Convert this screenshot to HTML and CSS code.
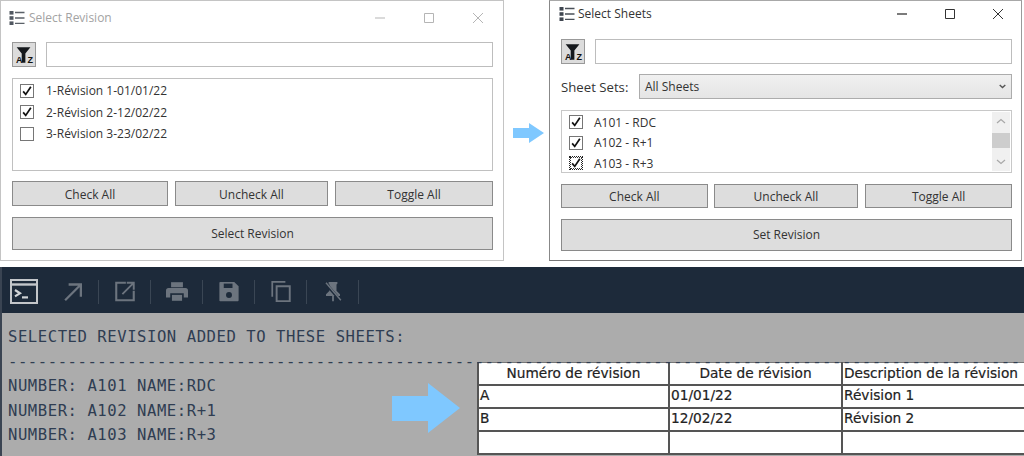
FILE: index.html
```html
<!DOCTYPE html>
<html lang="fr">
<head>
<meta charset="utf-8">
<title>Revision</title>
<link rel="stylesheet" href="styles.css">
</head>
<body>
<svg class="defs" width="0" height="0" aria-hidden="true">
  <symbol id="listicon" viewBox="0 0 16 16">
    <g fill="#3f4650"><rect x="0.5" y="1" width="4" height="3.6"/><rect x="0.5" y="6.2" width="4" height="3.6"/><rect x="0.5" y="11.4" width="4" height="3.6"/></g>
    <g stroke="#4a5058" stroke-width="1.3"><path d="M6 2.5h9.5M6 8h9.5M6 13.4h9.5"/></g>
  </symbol>
  <symbol id="funnel" viewBox="0 0 24 24">
    <path d="M4 4h15l-5.5 7v10h-4V11z" fill="#15181c"/>
  </symbol>
</svg>

<main class="page">
  <section class="toprow">
    <div class="window win-a">
      <header class="titlebar titlebar-a">
        <svg class="appicon"><use href="#listicon"/></svg>
        <span class="title">Select Revision</span>
        <span class="winctl">
          <svg width="12" height="12" viewBox="0 0 12 12"><path d="M1 6h10" stroke="currentColor"/></svg>
          <svg width="12" height="12" viewBox="0 0 12 12"><path d="M1.5 1.5h9v9h-9z" stroke="currentColor" fill="none"/></svg>
          <svg width="12" height="12" viewBox="0 0 12 12"><path d="M1 1l10 10M11 1L1 11" stroke="currentColor" fill="none"/></svg>
        </span>
      </header>
      <div class="search search-a">
        <button class="filterbtn"><svg class="funnel"><use href="#funnel"/></svg><span class="az">A</span><span class="az">Z</span></button>
        <div class="input"></div>
      </div>
      <div class="list list-a">
        <div class="row"><span class="cb on"><svg viewBox="0 0 14 14"><path d="M2.5 7.5l3 3.5 6-9" fill="none" stroke="#111" stroke-width="2"/></svg></span><span>1-Révision 1-01/01/22</span></div>
        <div class="row"><span class="cb on"><svg viewBox="0 0 14 14"><path d="M2.5 7.5l3 3.5 6-9" fill="none" stroke="#111" stroke-width="2"/></svg></span><span>2-Révision 2-12/02/22</span></div>
        <div class="row"><span class="cb"></span><span>3-Révision 3-23/02/22</span></div>
      </div>
      <div class="actions actions-a">
        <button class="btn">Check All</button>
        <button class="btn">Uncheck All</button>
        <button class="btn">Toggle All</button>
      </div>
      <button class="btn big big-a">Select Revision</button>
    </div>

    <div class="gap">
      <svg class="arrow-small" viewBox="0 0 31 20"><path d="M0 5h16V0l15 10-15 10v-5H0z" fill="#7fc8ff"/></svg>
    </div>

    <div class="window win-b">
      <header class="titlebar titlebar-b">
        <svg class="appicon"><use href="#listicon"/></svg>
        <span class="title">Select Sheets</span>
        <span class="winctl">
          <svg width="12" height="12" viewBox="0 0 12 12"><path d="M1 6h10" stroke="currentColor" stroke-width="1.3"/></svg>
          <svg width="12" height="12" viewBox="0 0 12 12"><path d="M1.5 1.5h9v9h-9z" stroke="currentColor" fill="none"/></svg>
          <svg width="12" height="12" viewBox="0 0 12 12"><path d="M1 1l10 10M11 1L1 11" stroke="currentColor" fill="none"/></svg>
        </span>
      </header>
      <div class="search search-b">
        <button class="filterbtn"><svg class="funnel"><use href="#funnel"/></svg><span class="az">A</span><span class="az">Z</span></button>
        <div class="input"></div>
      </div>
      <div class="setrow">
        <span class="setlabel">Sheet Sets:</span>
        <div class="combo"><span>All Sheets</span><svg width="7" height="5" viewBox="0 0 7 5"><path d="M.7 1l2.8 2.6L6.3 1" fill="none" stroke="#555" stroke-width="1.4"/></svg></div>
      </div>
      <div class="list list-b">
        <div class="rows">
          <div class="row"><span class="cb on"><svg viewBox="0 0 14 14"><path d="M2.5 7.5l3 3.5 6-9" fill="none" stroke="#111" stroke-width="2"/></svg></span><span>A101 - RDC</span></div>
          <div class="row"><span class="cb on"><svg viewBox="0 0 14 14"><path d="M2.5 7.5l3 3.5 6-9" fill="none" stroke="#111" stroke-width="2"/></svg></span><span>A102 - R+1</span></div>
          <div class="row"><span class="cb on dotted"><svg viewBox="0 0 14 14"><path d="M2.5 7.5l3 3.5 6-9" fill="none" stroke="#111" stroke-width="2"/></svg></span><span>A103 - R+3</span></div>
        </div>
        <div class="scrollbar">
          <svg width="10" height="6" viewBox="0 0 10 6"><path d="M1 5l4-3.5L9 5" fill="none" stroke="#a8a8a8" stroke-width="1.2"/></svg>
          <div class="thumb"></div>
          <svg width="10" height="6" viewBox="0 0 10 6"><path d="M1 1l4 3.5L9 1" fill="none" stroke="#a8a8a8" stroke-width="1.2"/></svg>
        </div>
      </div>
      <div class="actions actions-b">
        <button class="btn">Check All</button>
        <button class="btn">Uncheck All</button>
        <button class="btn">Toggle All</button>
      </div>
      <button class="btn big big-b">Set Revision</button>
    </div>
  </section>

  <section class="console">
    <div class="toolbar">
      <svg class="tool term" viewBox="0 0 28 25"><path d="M1 1h26v23H1z" fill="none" stroke="#c3c6ca" stroke-width="2"/><path d="M1 5.5h26" stroke="#c3c6ca" stroke-width="2.4"/><path d="M5 11l5 3.2-5 3.2" fill="none" stroke="#d0d3d6" stroke-width="2.2"/><path d="M12 18.4h6" stroke="#d0d3d6" stroke-width="2.2"/></svg>
      <span class="sep first"></span>
      <svg class="tool" viewBox="0 0 24 24"><path d="M3 22L21 4M7 4h14v14" fill="none" stroke="#6c747e" stroke-width="2.6"/></svg>
      <span class="sep"></span>
      <svg class="tool" viewBox="0 0 24 24"><path d="M13 2H2v20h20V11" fill="none" stroke="#6c747e" stroke-width="2.4"/><path d="M9 15L21 3M14 2h8v8" fill="none" stroke="#6c747e" stroke-width="2.2"/></svg>
      <span class="sep"></span>
      <svg class="tool" viewBox="0 0 26 24"><path d="M6 1h14v6H6z" fill="#6c747e"/><path d="M3 8h20a3 3 0 0 1 3 3v8h-5v-5H5v5H0v-8a3 3 0 0 1 3-3z" fill="#6c747e"/><path d="M7 16h12v7H7z" fill="#6c747e"/></svg>
      <span class="sep"></span>
      <svg class="tool" viewBox="0 0 24 24"><path d="M2 1h16l5 5v16a1 1 0 0 1-1 1H2a1 1 0 0 1-1-1V2a1 1 0 0 1 1-1z" fill="#6c747e"/><path d="M6 3h10v5H6z" fill="#1d2a3a"/><circle cx="12" cy="16" r="3.4" fill="#1d2a3a"/></svg>
      <span class="sep"></span>
      <svg class="tool" viewBox="0 0 24 24"><path d="M7 6h15v17H7z" fill="none" stroke="#6c747e" stroke-width="2.2"/><path d="M2 18V1h15" fill="none" stroke="#6c747e" stroke-width="2"/></svg>
      <span class="sep"></span>
      <svg class="tool" viewBox="0 0 24 24"><path d="M7 1h10v2l-1 1v7l4 4v2h-7v6h-2v-6H4v-2l4-4V4L7 3z" fill="#6c747e"/><path d="M3 2l18 21" stroke="#1d2a3a" stroke-width="3.4"/><path d="M4 2l17 20" stroke="#6c747e" stroke-width="1.6"/></svg>
      <span class="sep"></span>
    </div>
    <div class="output">
      <div class="outline">SELECTED REVISION ADDED TO THESE SHEETS:</div>
      <div class="outline dashes">------------------------------------------------------------------------------------------------------</div>
      <div class="outline">NUMBER: A101 NAME:RDC</div>
      <div class="outline">NUMBER: A102 NAME:R+1</div>
      <div class="outline">NUMBER: A103 NAME:R+3</div>
      <svg class="arrow-big" viewBox="0 0 68 50"><path d="M0 13h36V0l32 25-32 25V38H0z" fill="#7fc8ff"/></svg>
      <table class="revtable">
        <colgroup><col class="c1"><col class="c2"><col class="c3"></colgroup>
        <tr class="headrow"><th>Numéro de révision</th><th>Date de révision</th><th class="thleft">Description de la révision</th></tr>
        <tr><td>A</td><td>01/01/22</td><td>Révision 1</td></tr>
        <tr><td>B</td><td>12/02/22</td><td>Révision 2</td></tr>
        <tr><td></td><td></td><td></td></tr>
      </table>
    </div>
  </section>
</main>
</body>
</html>
```
FILE: styles.css
```css
* { box-sizing: border-box; }
html, body { margin: 0; padding: 0; background: #fff; }
body { width: 1024px; height: 456px; overflow: hidden; font-family: "Open Sans", "Noto Sans", sans-serif; color: #333; }
.defs { position: absolute; }
.page { display: flex; flex-direction: column; height: 456px; }

.toprow { display: flex; height: 267px; flex: none; }
.window { display: flex; flex-direction: column; border: 1px solid #c4c4c4; background: #fff; height: 261px; }
.win-a { width: 504px; padding: 0 10px 0 11px; }
.win-b { width: 473px; padding: 0 9px 0 11px; border-color: #a8a8a8 #9a9a9a #777 #888; }
.gap { width: 45px; flex: none; padding: 123px 0 0 9px; }
.arrow-small { display: block; width: 31px; height: 20px; }

.titlebar { display: flex; align-items: center; flex: none; font-size: 12px; }
.titlebar-a { height: 41px; padding-bottom: 8px; margin-left: -3px; color: #a3a3a3; }
.titlebar-b { height: 38px; padding-bottom: 13px; margin-left: -2px; color: #333; }
.appicon { width: 16px; height: 16px; margin-right: 4px; flex: none; }
.titlebar-b .appicon { margin-right: 3px; }
.titlebar-a .appicon { opacity: .9; }
.title { flex: 1; }
.winctl { display: flex; }
.titlebar-a .winctl { gap: 37px; margin-right: 9px; color: #b5b5b5; }
.titlebar-b .winctl { gap: 36px; margin-right: 8px; color: #333; }

.search { display: flex; flex: none; height: 25px; gap: 10px; }
.filterbtn { position: relative; width: 24px; border: 1px solid #999; background: #dcdcdc; display: flex; justify-content: space-between; align-items: flex-end; font-family: "Liberation Sans", sans-serif; padding: 0 2px 2px 3px; }
.funnel { position: absolute; left: 0; top: 0; width: 22px; height: 23px; }
.az { position: relative; font-size: 9px; font-weight: 700; line-height: 8px; color: #111; }
.input { flex: 1; border: 1px solid #bdbdbd; background: #fff; }

.list { border: 1px solid #c0c0c0; background: #fff; flex: none; font-size: 12px; }
.list-a { height: 93px; margin-top: 11px; padding: 1px 0 0 7px; }
.list-b { height: 63px; margin-top: 11px; padding: 1px 1px 1px 7px; display: flex; border-color: #c8c8c8; }
.rows { flex: 1; overflow: hidden; }
.row { display: flex; align-items: center; gap: 12px; }
.list-a .row { height: 21.5px; }
.list-b .row { height: 20.5px; gap: 11px; }
.cb { width: 14px; height: 14px; border: 1px solid #767676; background: #fff; display: block; flex: none; }
.cb svg { display: block; width: 12px; height: 12px; }
.dotted { border: 1px dotted #222; outline: 1px dotted #333; outline-offset: -2px; }

.scrollbar { width: 18px; flex: none; background: #f0f0f0; display: flex; flex-direction: column; align-items: center; justify-content: space-between; padding: 6px 0; }
.thumb { width: 100%; height: 15px; background: #cdcdcd; margin-top: -2px; }

.setrow { display: flex; align-items: center; height: 25px; margin-top: 10px; flex: none; }
.setlabel { width: 78px; font-size: 13.2px; color: #333; flex: none; }
.combo { flex: 1; height: 25px; border: 1px solid #acacac; background: linear-gradient(#f0f0f0, #e5e5e5); display: flex; align-items: center; justify-content: space-between; padding: 0 5px 0 5px; font-size: 12px; }

.actions { display: flex; flex: none; }
.actions-a { height: 25px; margin-top: 10px; gap: 7px; }
.actions-a .btn { padding-top: 2px; }
.actions-a .btn:nth-child(1) { width: 156px; }
.actions-a .btn:nth-child(2) { width: 153px; }
.actions-a .btn:nth-child(3) { width: 158px; }
.actions-b { height: 24px; margin-top: 11px; gap: 6px; }
.actions-b .btn:nth-child(1) { width: 147px; }
.actions-b .btn:nth-child(2) { width: 145px; }
.actions-b .btn:nth-child(3) { width: 147px; margin-left: 1px; }
.btn { border: 1px solid #8a8a8a; background: #dddddd; color: #333; font: 12px "Open Sans", "Noto Sans", sans-serif; padding: 0; }
.big { flex: none; margin-top: 11px; }
.big-a { height: 33px; }
.big-b { height: 32px; padding-bottom: 2px; }

.console { flex: 1; display: flex; flex-direction: column; border-left: 2px solid #3a4452; }
.toolbar { height: 46px; flex: none; background: #1d2a3a; display: flex; align-items: center; padding: 3px 0 0 9px; }
.tool { width: 22px; height: 21px; flex: none; margin: 0 14.5px; }
.term { width: 28px; height: 25px; margin: 0 0 0 -1px; }
.sep { width: 1px; height: 24px; background: #3a4654; flex: none; }
.sep.first { width: 0; background: none; margin-left: 9px; }

.output { position: relative; flex: 1; background: #acacac; padding: 12px 0 0 6px; overflow: hidden; }
.outline { height: 24.5px; font: 15.6px/24.5px "DejaVu Sans Mono", "Liberation Mono", monospace; letter-spacing: .54px; color: #2f3d52; white-space: pre; }
.outline.dashes { position: relative; z-index: 1; height: 4px; line-height: 4px; margin: 10px 0 10.5px; }
.arrow-big { position: absolute; left: 390px; top: 70px; width: 68px; height: 50px; }
.revtable { position: absolute; left: 475px; top: 49px; width: 547px; border-collapse: collapse; table-layout: fixed; background: #fff; font: 13.7px "DejaVu Sans", "Open Sans", sans-serif; color: #222; }
.c1 { width: 191px; }
.c2 { width: 173px; }
.c3 { width: 183px; }
.revtable tr { height: 23px; }
.revtable .headrow { height: 22px; }
.revtable th, .revtable td { border: 2px solid #555; padding: 0 1px; line-height: 18px; overflow: hidden; white-space: nowrap; }
.revtable th { font-weight: 400; text-align: center; -webkit-text-stroke: .2px #222; border-top: 1px solid #777; }
.revtable .thleft { text-align: left; }
.revtable td { -webkit-text-stroke: .2px #222; padding-bottom: 2px; }
```
